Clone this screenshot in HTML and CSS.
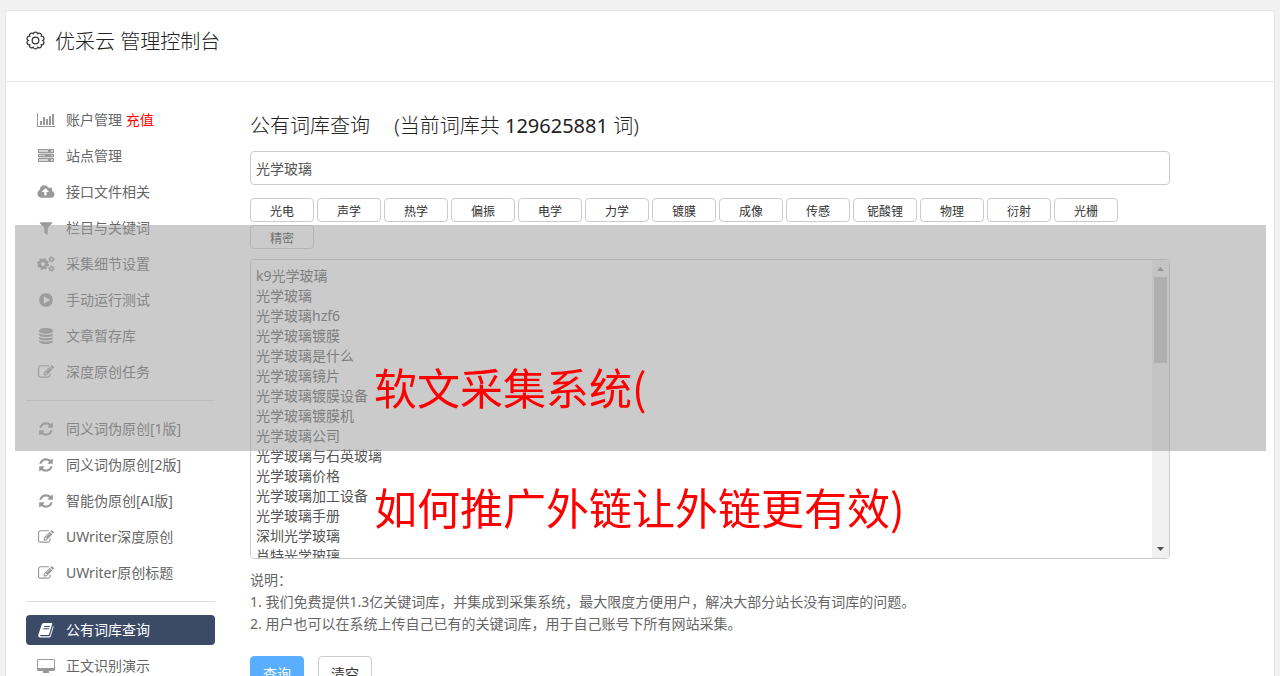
FILE: index.html
```
<!DOCTYPE html>
<html lang="zh-CN">
<head>
    <meta charset="UTF-8">
    <meta name="viewport" content="width=device-width, initial-scale=1.0">
    <title>优采云 管理控制台</title>
    <link rel="stylesheet" href="styles.css">
</head>
<body>
    <svg class="sprite" aria-hidden="true">
        <symbol id="chart" viewBox="0 -1 18 16">
            <path d="M0 0h1v13h17v1H0zM3 8h2v4H3zM6 4h2v8H6zM9 6h2v6H9zM12 3h2v9h-2zM15 1h2v11h-2z"/>
        </symbol>
        <symbol id="server" viewBox="-1 -1 18 16">
            <path fill-rule="evenodd" d="M0 0h16v4H0zM1 1v2h9V1zM13 1v2h2V1zM0 5h16v3H0zM1 6v1h6V6zM13 6v1h2V6zM0 9h16v4H0zM1 10v2h9v-2zM13 10v2h2v-2z"/>
            <path opacity=".4" d="M1 1h14v11H1z"/>
        </symbol>
        <symbol id="cloud" viewBox="0 0 1920 1792">
            <path d="M1280 864q0-14-9-23l-352-352q-9-9-23-9t-23 9l-351 351q-10 12-10 24 0 14 9 23t23 9h224v352q0 13 9.500 22.500t22.500 9.500h192q13 0 22.500-9.500t9.500-22.500v-352h224q13 0 22.500-9.500t9.500-22.500zm640 288q0 159-112.500 271.500t-271.500 112.500h-1088q-185 0-316.500-131.500t-131.500-316.500q0-130 70-240t188-165q-2-30-2-43 0-212 150-362t362-150q156 0 285.500 87t188.500 231q71-62 166-62 106 0 181 75t75 181q0 76-41 138 130 31 213.500 135.500t83.500 238.500z"/>
        </symbol>
        <symbol id="filter" viewBox="0 0 1792 1792">
            <path d="M1595 295q17 41-14 70l-493 493v742q0 42-39 59-13 5-25 5-27 0-45-19l-256-256q-19-19-19-45v-486l-493-493q-31-29-14-70 17-39 59-39h1280q42 0 59 39z"/>
        </symbol>
        <symbol id="cogs" viewBox="0 0 18 16">
            <g fill="none" stroke="currentColor">
                <circle cx="6" cy="8" r="3.500" stroke-width="3"/>
                <circle cx="6" cy="8" r="5.200" stroke-width="1.600" stroke-dasharray="2.040 2.040"/>
                <circle cx="14.500" cy="3.300" r="1.700" stroke-width="1.400"/>
                <circle cx="14.500" cy="3.300" r="2.700" stroke-width="1" stroke-dasharray="1.410 1.410"/>
                <circle cx="14.500" cy="12.700" r="1.700" stroke-width="1.400"/>
                <circle cx="14.500" cy="12.700" r="2.700" stroke-width="1" stroke-dasharray="1.410 1.410"/>
            </g>
        </symbol>
        <symbol id="play" viewBox="0 0 1792 1792">
            <path d="M896 128q209 0 385.500 103t279.500 279.500 103 385.500-103 385.500-279.500 279.500-385.500 103-385.500-103-279.500-279.500-103-385.500 103-385.500 279.500-279.500 385.500-103zm384 823q32-18 32-55t-32-55l-544-320q-31-19-64-1-32 19-32 56v640q0 37 32 56 16 8 32 8 17 0 32-9z"/>
        </symbol>
        <symbol id="database" viewBox="0 0 1792 1792">
            <path d="M896 768q237 0 443-43t325-127v170q0 69-103 128t-280 93.500-385 34.500-385-34.500-280-93.500-103-128v-170q119 84 325 127t443 43zm0 768q237 0 443-43t325-127v170q0 69-103 128t-280 93.500-385 34.500-385-34.500-280-93.500-103-128v-170q119 84 325 127t443 43zm0-384q237 0 443-43t325-127v170q0 69-103 128t-280 93.500-385 34.500-385-34.500-280-93.500-103-128v-170q119 84 325 127t443 43zm0-1152q208 0 385 34.500t280 93.500 103 128v128q0 69-103 128t-280 93.500-385 34.500-385-34.500-280-93.500-103-128v-128q0-69 103-128t280-93.500 385-34.500z"/>
        </symbol>
        <symbol id="edit" viewBox="0 0 1792 1792">
            <path d="M888 1184l116-116-152-152-116 116v56h96v96h56zm440-720q-16-16-33 1l-350 350q-17 17-1 33t33-1l350-350q17-17 1-33zm80 594v190q0 119-84.500 203.500t-203.500 84.500h-832q-119 0-203.500-84.500t-84.500-203.500v-832q0-119 84.500-203.500t203.500-84.500h832q63 0 117 25 15 7 18 23 3 17-9 29l-49 49q-14 14-32 8-23-6-45-6h-832q-66 0-113 47t-47 113v832q0 66 47 113t113 47h832q66 0 113-47t47-113v-126q0-13 9-22l64-64q15-15 35-7t20 29zm-96-738l288 288-672 672h-288v-288zm444 132l-92 92-288-288 92-92q28-28 68-28t68 28l152 152q28 28 28 68t-28 68z"/>
        </symbol>
        <symbol id="refresh" viewBox="0 0 1792 1792">
            <path d="M1639 1056q0 5-1 7-64 268-268 434.500t-478 166.500q-146 0-282.500-55t-243.500-157l-129 129q-19 19-45 19t-45-19-19-45v-448q0-26 19-45t45-19h448q26 0 45 19t19 45-19 45l-137 137q71 66 161 102t187 36q134 0 250-65t186-179q11-17 53-117 8-23 30-23h192q13 0 22.500 9.500t9.500 22.500zm25-800v448q0 26-19 45t-45 19h-448q-26 0-45-19t-19-45 19-45l138-138q-148-137-349-137-134 0-250 65t-186 179q-11 17-53 117-8 23-30 23h-199q-13 0-22.500-9.500t-9.500-22.500v-7q65-268 270-434.500t480-166.500q146 0 284 55.500t245 156.500l130-129q19-19 45-19t45 19 19 45z"/>
        </symbol>
        <symbol id="book" viewBox="0 0 16 16">
            <path fill-rule="evenodd" d="M5.500 1h8q1 0 .7 1l-3 10q-.3 1-1.300 1H3q-1.400 0-1 .8.200.4 1 .4h8q.8 0 1-.8l3-9.700q.8.600.5 1.500l-2.800 9.200q-.4 1.100-1.500 1.100H2.600Q0 15.500.3 13L3.700 2.500Q4.200 1 5.500 1zM6.300 4l-.3 1h5.800l.3-1zM5.600 6.300l-.3 1h5.800l.3-1z"/>
        </symbol>
        <symbol id="desktop" viewBox="0 0 18 16">
            <path fill-rule="evenodd" d="M1.500 1h15q1.500 0 1.500 1.500v9q0 1.500-1.500 1.500H12v2H6v-2H1.500Q0 13 0 11.500v-9Q0 1 1.500 1zM1 2v8h16V2z"/>
        </symbol>
    </svg>

    <div class="panel">
        <header class="panel-header">
            <svg class="gear" viewBox="0 0 20 20" aria-hidden="true">
                <path d="M17.600 10a2.400 2.400 0 0 1-1.500 4.500 2.400 2.400 0 0 1-3.800 2.700 2.400 2.400 0 0 1-4.600 0 2.400 2.400 0 0 1-3.800-2.700 2.400 2.400 0 0 1-1.500-4.500 2.400 2.400 0 0 1 1.500-4.500 2.400 2.400 0 0 1 3.800-2.700 2.400 2.400 0 0 1 4.600 0 2.400 2.400 0 0 1 3.800 2.700 2.400 2.400 0 0 1 1.500 4.500z"/>
                <circle cx="10" cy="10" r="3.500"/>
            </svg>
            <h1>优采云 管理控制台</h1>
        </header>

        <div class="panel-body">
            <nav class="sidebar">
                <a href="#"><svg><use href="#chart"/></svg><span>账户管理 <em>充值</em></span></a>
                <a href="#"><svg><use href="#server"/></svg><span>站点管理</span></a>
                <a href="#"><svg><use href="#cloud"/></svg><span>接口文件相关</span></a>
                <a href="#"><svg><use href="#filter"/></svg><span>栏目与关键词</span></a>
                <a href="#"><svg><use href="#cogs"/></svg><span>采集细节设置</span></a>
                <a href="#"><svg><use href="#play"/></svg><span>手动运行测试</span></a>
                <a href="#"><svg><use href="#database"/></svg><span>文章暂存库</span></a>
                <a href="#"><svg><use href="#edit"/></svg><span>深度原创任务</span></a>
                <hr>
                <a href="#"><svg><use href="#refresh"/></svg><span>同义词伪原创[1版]</span></a>
                <a href="#"><svg><use href="#refresh"/></svg><span>同义词伪原创[2版]</span></a>
                <a href="#"><svg><use href="#refresh"/></svg><span>智能伪原创[AI版]</span></a>
                <a href="#"><svg><use href="#edit"/></svg><span>UWriter深度原创</span></a>
                <a href="#"><svg><use href="#edit"/></svg><span>UWriter原创标题</span></a>
                <hr>
                <a href="#" class="active"><svg><use href="#book"/></svg><span>公有词库查询</span></a>
                <a href="#"><svg><use href="#desktop"/></svg><span>正文识别演示</span></a>
            </nav>

            <main class="content">
                <h2><label for="keyword">公有词库查询</label> <span id="total">(当前词库共 <b>129625881</b> 词)</span></h2>
                <input type="text" id="keyword" class="keyword" value="光学玻璃">

                <div class="tags">
                    <button type="button">光电</button>
                    <button type="button">声学</button>
                    <button type="button">热学</button>
                    <button type="button">偏振</button>
                    <button type="button">电学</button>
                    <button type="button">力学</button>
                    <button type="button">镀膜</button>
                    <button type="button">成像</button>
                    <button type="button">传感</button>
                    <button type="button">铌酸锂</button>
                    <button type="button">物理</button>
                    <button type="button">衍射</button>
                    <button type="button">光栅</button>
                    <button type="button">精密</button>
                </div>

                <div class="results">
                    <textarea aria-labelledby="total">k9光学玻璃
光学玻璃
光学玻璃hzf6
光学玻璃镀膜
光学玻璃是什么
光学玻璃镜片
光学玻璃镀膜设备
光学玻璃镀膜机
光学玻璃公司
光学玻璃与石英玻璃
光学玻璃价格
光学玻璃加工设备
光学玻璃手册
深圳光学玻璃
肖特光学玻璃</textarea>
                    <div class="scrollbar" aria-hidden="true">
                        <svg class="arrow-up" viewBox="0 0 7 4"><path d="M0 4l3.500-4L7 4z"/></svg>
                        <div class="thumb"></div>
                        <svg class="arrow-down" viewBox="0 0 7 4"><path d="M0 0l3.500 4L7 0z"/></svg>
                    </div>
                </div>

                <div class="note">
                    <p>说明：</p>
                    <p>1. 我们免费提供1.3亿关键词库，并集成到采集系统，最大限度方便用户，解决大部分站长没有词库的问题。</p>
                    <p>2. 用户也可以在系统上传自己已有的关键词库，用于自己账号下所有网站采集。</p>
                </div>

                <div class="actions">
                    <button type="button" class="primary">查询</button>
                    <button type="button">清空</button>
                </div>
            </main>
        </div>
    </div>

    <div class="band"></div>
    <div class="caption">软文采集系统(<br>如何推广外链让外链更有效)</div>
</body>
</html>
```
FILE: styles.css
```
* {
    box-sizing: border-box;
}

html {
    height: 100%;
    overflow: hidden;
}

body {
    position: relative;
    margin: 0;
    padding: 10px 5px;
    background-color: #f1f1f1;
    color: #666;
    font: 14px/20px "Noto Sans", "Noto Sans CJK SC", sans-serif;
}

button,
input,
textarea {
    border: 1px solid #ccc;
    border-radius: 4px;
    background-color: #fff;
    font-family: inherit;
}

.sprite {
    display: none;
}

.panel {
    border: 1px solid #e5e5e5;
    border-radius: 4px;
    background-color: #fff;
}

.panel-header {
    display: flex;
    align-items: flex-start;
    gap: 10px;
    height: 71px;
    padding: 20px;
    border-bottom: 1px solid #e5e5e5;
}

.gear {
    width: 19px;
    height: 19px;
    fill: none;
    stroke: #333;
    stroke-width: 1.300;
}

h1,
h2 {
    margin: 0;
    color: #222;
    font-size: 20px;
    font-weight: 300;
    line-height: 22px;
}

.panel-body {
    display: flex;
    gap: 35px;
    padding: 23px 104px 20px 20px;
}

/* Sidebar */
.sidebar {
    display: flex;
    flex: 0 0 189px;
    flex-direction: column;
    gap: 6px;
}

.sidebar a {
    display: flex;
    align-items: center;
    gap: 11px;
    height: 30px;
    padding: 0 11px;
    border-radius: 4px;
    color: #666;
    text-decoration: none;
}

.sidebar svg {
    width: 18px;
    height: 16px;
    color: #999;
    fill: currentColor;
}

.sidebar em {
    color: #f00;
    font-style: normal;
}

.sidebar hr {
    width: 100%;
    margin: 7px 0;
    border: 0;
    border-top: 1px solid #ddd;
}

.sidebar .active {
    background-color: #3b4b67;
    color: #fff;
}

.sidebar .active svg {
    color: #fff;
}

/* Content */
.content {
    flex: 1;
    min-width: 0;
    padding-top: 10px;
}

h2 span {
    margin-left: 19px;
}

h2 b {
    font-weight: 400;
}

.keyword {
    display: block;
    width: 100%;
    height: 34px;
    margin-top: 14px;
    padding: 0 5px;
    color: #555;
    font-size: 14px;
}

.tags {
    display: flex;
    flex-wrap: wrap;
    gap: 3px;
    margin-top: 13px;
}

.tags button {
    width: 64px;
    height: 24px;
    padding: 2px 0 0;
    color: #333;
    font-size: 12px;
}

.results {
    position: relative;
    margin-top: 10px;
}

.results textarea {
    display: block;
    width: 100%;
    height: 300px;
    padding: 6px 5px;
    color: #555;
    font-size: 14px;
    line-height: 20px;
    resize: none;
}

.scrollbar {
    position: absolute;
    top: 1px;
    right: 1px;
    bottom: 1px;
    display: flex;
    flex-direction: column;
    align-items: center;
    width: 17px;
    padding: 7px 0;
    border-radius: 0 3px 3px 0;
    background-color: #f0f0f0;
}

.scrollbar svg {
    width: 7px;
    height: 4px;
    fill: #505050;
}

.scrollbar .arrow-up {
    fill: #888;
}

.scrollbar .thumb {
    width: 13px;
    height: 86px;
    margin: 6px 0 auto;
    background-color: #c1c1c1;
}

.note {
    margin-top: 10px;
    line-height: 22px;
}

.note p {
    margin: 0;
}

.actions {
    display: flex;
    gap: 14px;
    margin-top: 21px;
}

.actions button {
    width: 54px;
    height: 34px;
    padding: 0;
    color: #333;
    font-size: 14px;
}

.actions .primary {
    border-color: #5aaeff;
    background-color: #5aaeff;
    color: #fff;
}

/* Caption laid over the page */
.band {
    position: absolute;
    top: 225px;
    right: 14px;
    left: 15px;
    height: 226px;
    background-color: rgba(160, 160, 160, 0.55);
    pointer-events: none;
}

.caption {
    position: absolute;
    top: 326px;
    left: 374px;
    color: #f00;
    font-family: "Noto Sans CJK SC", sans-serif;
    font-size: 43px;
    line-height: 120px;
    white-space: nowrap;
    pointer-events: none;
}
```
